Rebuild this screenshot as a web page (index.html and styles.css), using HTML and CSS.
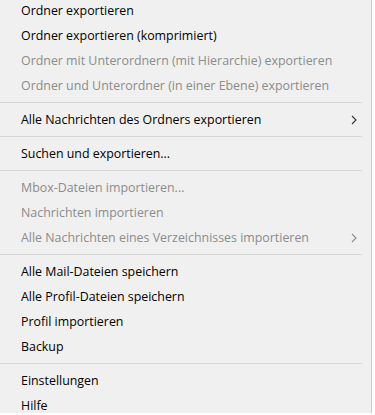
FILE: index.html
```html
<!DOCTYPE html>
<html lang="de">
<head>
    <meta charset="UTF-8">
    <meta name="viewport" content="width=device-width, initial-scale=1.0">
    <title>Ordner-Menü</title>
    <link rel="stylesheet" href="styles.css">
</head>
<body>
    <div class="menu">
        <div class="item">Ordner exportieren</div>
        <div class="item">Ordner exportieren (komprimiert)</div>
        <div class="item disabled">Ordner mit Unterordnern (mit Hierarchie) exportieren</div>
        <div class="item disabled">Ordner und Unterordner (in einer Ebene) exportieren</div>
        <div class="sep"></div>
        <div class="item">
            <span>Alle Nachrichten des Ordners exportieren</span>
            <svg class="arrow" width="6" height="10" viewBox="0 0 6 10"><polyline points="1,1 5,5 1,9" /></svg>
        </div>
        <div class="sep"></div>
        <div class="item">Suchen und exportieren...</div>
        <div class="sep"></div>
        <div class="item disabled">Mbox-Dateien importieren...</div>
        <div class="item disabled">Nachrichten importieren</div>
        <div class="item disabled">
            <span>Alle Nachrichten eines Verzeichnisses importieren</span>
            <svg class="arrow" width="6" height="10" viewBox="0 0 6 10"><polyline points="1,1 5,5 1,9" /></svg>
        </div>
        <div class="sep"></div>
        <div class="item">Alle Mail-Dateien speichern</div>
        <div class="item">Alle Profil-Dateien speichern</div>
        <div class="item">Profil importieren</div>
        <div class="item">Backup</div>
        <div class="sep"></div>
        <div class="item">Einstellungen</div>
        <div class="item">Hilfe</div>
    </div>
</body>
</html>
```

FILE: styles.css
```css
body {
    margin: 0;
    padding: 0;
    background: #ffffff;
    font-family: "Open Sans", "Noto Sans", sans-serif;
    font-size: 12.4px;
}
.menu {
    width: 371px;
    height: 415px;
    background: #f0f0f0;
    border-right: 1px solid #cccccc;
    margin-top: -2px;
    overflow: hidden;
}
.item {
    height: 25px;
    display: flex;
    align-items: center;
    justify-content: space-between;
    padding-left: 21px;
    padding-right: 14px;
    color: #000000;
}
.item.disabled {
    color: #8c8c8c;
}
.arrow {
    fill: none;
    stroke: #333333;
    stroke-width: 1.1;
}
.disabled .arrow {
    stroke: #8c8c8c;
}
.sep {
    height: 1px;
    background: #d7d7d7;
    margin: 4px 9px 4px 0;
}
```
